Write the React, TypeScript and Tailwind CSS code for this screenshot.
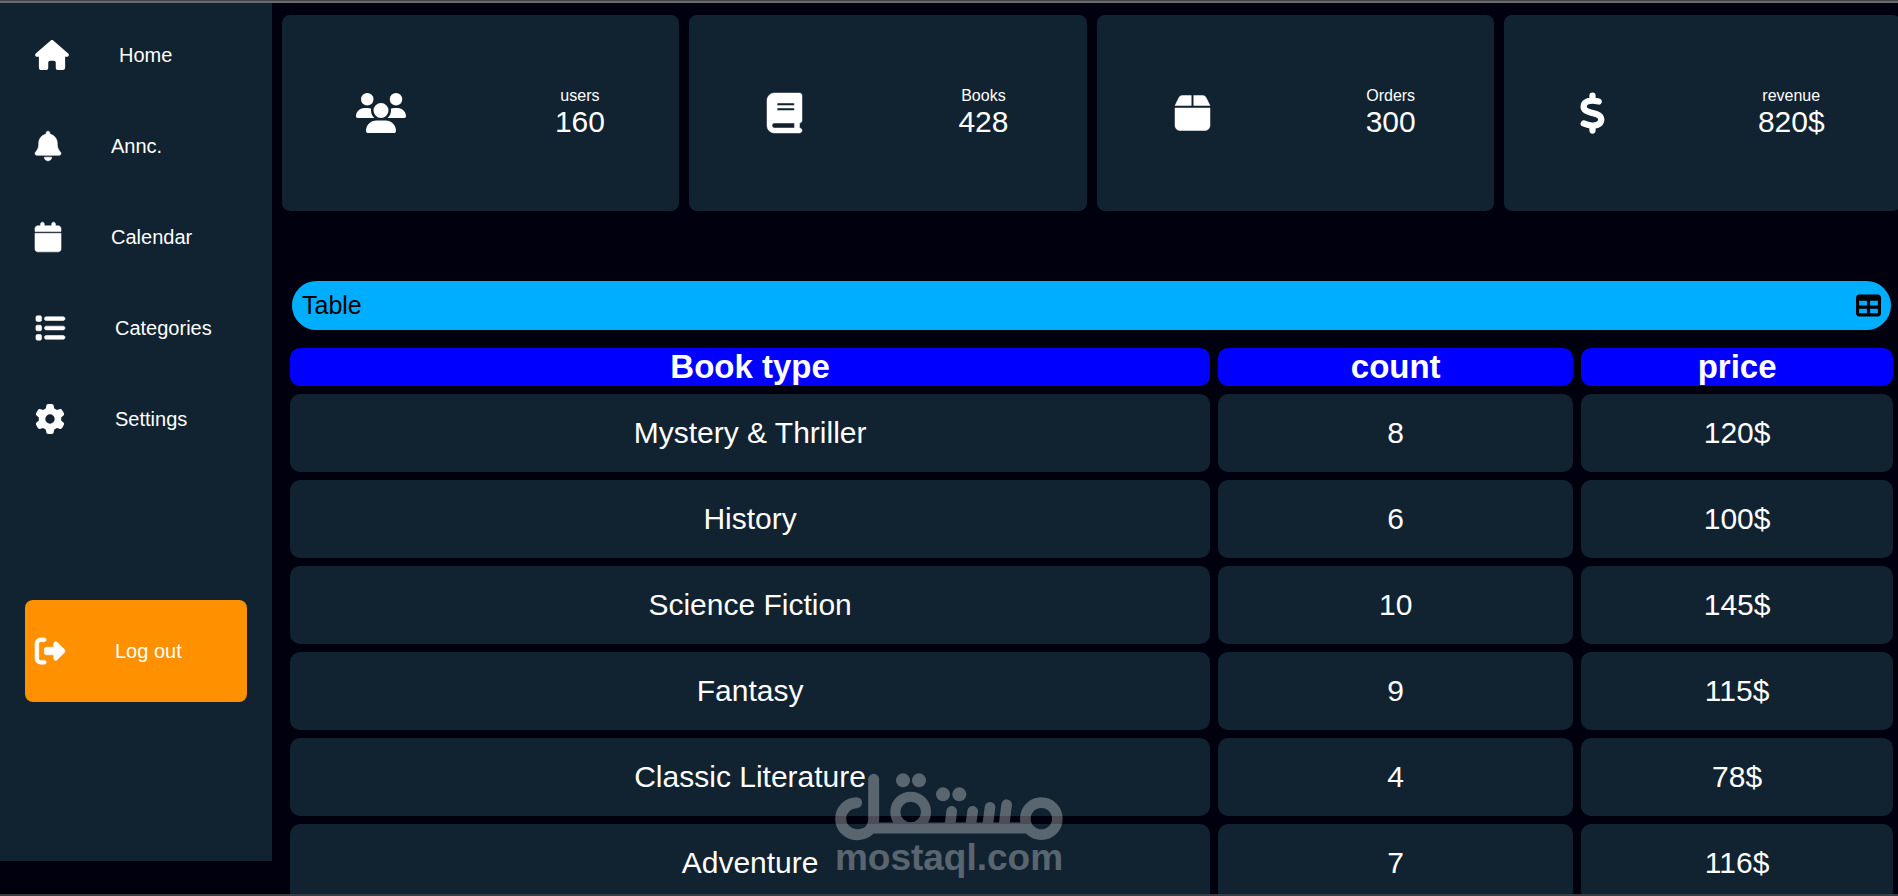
import React from 'react';
import {
  FaBell,
  FaBook,
  FaBox,
  FaCalendar,
  FaDollarSign,
  FaGear,
  FaHouse,
  FaList,
  FaRightFromBracket,
  FaTable,
  FaUsers,
} from 'react-icons/fa6';

// Sidebar links
const navItems = [
  { name: 'Home', href: '#home', icon: <FaHouse className="h-[30px] w-[34px]" /> },
  { name: 'Annc.', href: '#annc', icon: <FaBell className="h-[30px] w-[26px] overflow-visible stroke-[10px]" /> },
  { name: 'Calendar', href: '#calendar', icon: <FaCalendar className="h-[30px] w-[26px] overflow-visible stroke-[10px]" /> },
  { name: 'Categories', href: '#categories', icon: <FaList className="h-[30px] w-[30px] overflow-visible stroke-[10px]" /> },
  { name: 'Settings', href: '#settings', icon: <FaGear className="h-[30px] w-[30px]" /> },
];

// Summary cards
const stats = [
  { label: 'users', value: '160', icon: <FaUsers className="h-10 w-[50px]" /> },
  { label: 'Books', value: '428', icon: <FaBook className="h-10 w-[35px] overflow-visible stroke-[6px]" /> },
  { label: 'Orders', value: '300', icon: <FaBox className="h-10 w-[35px] overflow-visible stroke-[6px]" /> },
  { label: 'revenue', value: '820$', icon: <FaDollarSign className="h-10 w-[25px] overflow-visible stroke-[16px]" /> },
];

const books = [
  { type: 'Mystery & Thriller', count: 8, price: '120$' },
  { type: 'History', count: 6, price: '100$' },
  { type: 'Science Fiction', count: 10, price: '145$' },
  { type: 'Fantasy', count: 9, price: '115$' },
  { type: 'Classic Literature', count: 4, price: '78$' },
  { type: 'Adventure', count: 7, price: '116$' },
];

const Sidebar: React.FC = () => (
  <aside className="flex w-[272px] shrink-0 flex-col self-start bg-[#112231] pt-[6px] pb-[159px] text-xl">
    <nav>
      {navItems.map((item) => (
        <a
          key={item.name}
          href={item.href}
          className="flex h-[91px] items-center gap-[50px] pl-[35px]"
        >
          {item.icon}
          <span>{item.name}</span>
        </a>
      ))}
    </nav>
    <button
      type="button"
      className="mx-[25px] mt-[136px] flex h-[102px] items-center gap-[50px] rounded-lg bg-[#ff9100] pl-[10px]"
    >
      <FaRightFromBracket className="h-[30px] w-[30px] overflow-visible stroke-[10px]" />
      <span>Log out</span>
    </button>
  </aside>
);

const Stats: React.FC = () => (
  <section className="grid grid-cols-4 gap-[10px]">
    {stats.map((stat) => (
      <div
        key={stat.label}
        className="flex h-[196px] items-center justify-around rounded-lg bg-[#112231]"
      >
        {stat.icon}
        <div className="text-center">
          <p className="text-base leading-[18px]">{stat.label}</p>
          <p className="text-[30px] leading-[34px]">{stat.value}</p>
        </div>
      </div>
    ))}
  </section>
);

const BooksTable: React.FC = () => (
  <section className="mt-[70px]">
    <div className="mx-[10px] mb-[10px] flex items-center justify-between rounded-full bg-[#00aeff] p-[10px] text-black">
      <h2 className="text-[25px] leading-[29px]">Table</h2>
      <FaTable className="h-[25px] w-[25px]" />
    </div>
    <table className="w-full border-separate border-spacing-2 text-center">
      <thead>
        <tr className="text-[33px] leading-[38px]">
          <th className="rounded-[10px] bg-[#0000ff] p-0">Book type</th>
          <th className="rounded-[10px] bg-[#0000ff] p-0">count</th>
          <th className="rounded-[10px] bg-[#0000ff] p-0">price</th>
        </tr>
      </thead>
      <tbody>
        {books.map((book) => (
          <tr key={book.type} className="text-[30px] leading-[34px]">
            <td className="rounded-[10px] bg-[#112231] px-0 py-[22px]">{book.type}</td>
            <td className="rounded-[10px] bg-[#112231] px-0 py-[22px]">{book.count}</td>
            <td className="rounded-[10px] bg-[#112231] px-0 py-[22px]">{book.price}</td>
          </tr>
        ))}
      </tbody>
    </table>
  </section>
);

const Watermark: React.FC = () => (
  <div className="pointer-events-none absolute inset-x-0 bottom-[19px] flex flex-col items-center text-white opacity-30">
    <svg
      viewBox="105 68 684 204"
      className="h-[68px] w-[228px]"
      fill="none"
      stroke="currentColor"
      strokeLinecap="round"
      aria-hidden="true"
    >
      {/* lam */}
      <path d="M170 157A48 48 0 1 0 170 253C200 253 221 235 221 205V87" strokeWidth="33" />
      {/* base line */}
      <path d="M214 233H678" strokeWidth="33" />
      {/* qaf */}
      <circle cx="332" cy="185" r="46" strokeWidth="30" />
      {/* teeth */}
      <path d="M455 183L450 225M518 183L512 225M570 171L563 225M620 163L612 225" strokeWidth="32" />
      {/* mim */}
      <circle cx="724" cy="205" r="48" strokeWidth="32" />
      {/* dots */}
      <g fill="currentColor" stroke="none">
        <circle cx="309" cy="90" r="21" />
        <circle cx="357" cy="90" r="21" />
        <circle cx="429" cy="132" r="21" />
        <circle cx="478" cy="132" r="21" />
      </g>
    </svg>
    <span className="text-[37px] leading-[34px] font-bold">mostaql.com</span>
  </div>
);

const App: React.FC = () => {
  return (
    <div className="relative flex h-screen flex-col overflow-hidden border-b-2 border-[#3c3c3c] bg-[#00000f] font-['Liberation_Sans',Arial,sans-serif] text-white">
      <div className="h-[3px] shrink-0 border-t border-[#444448] bg-[#6b6b6f]" />
      <div className="flex min-h-0 flex-1">
        <Sidebar />
        <main className="-mr-[3px] min-w-0 flex-1 pt-3 pl-[10px]">
          <Stats />
          <BooksTable />
        </main>
      </div>
      <Watermark />
    </div>
  );
};

export default App;
